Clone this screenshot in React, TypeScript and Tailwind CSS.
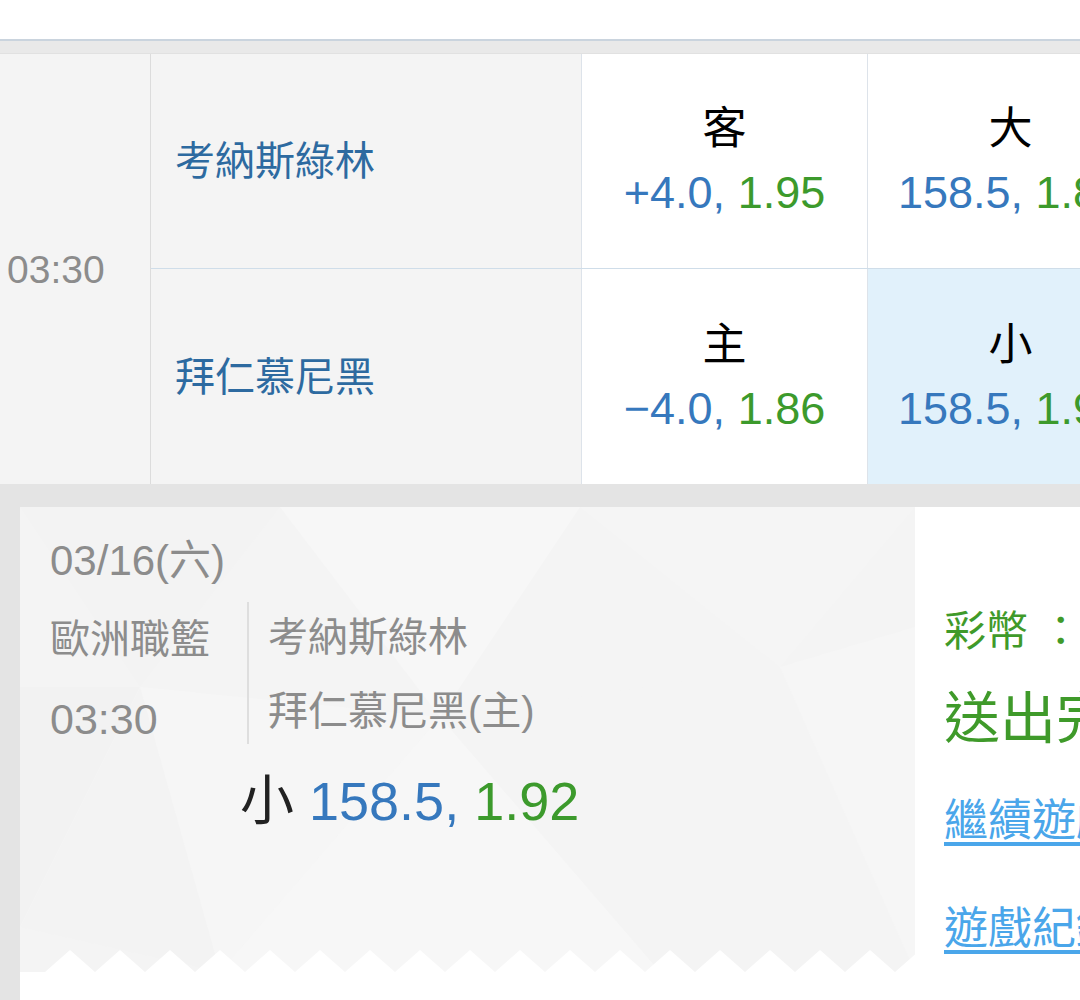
import React from 'react';

const font = { fontFamily: '"Liberation Sans", "Noto Sans CJK TC", sans-serif' };

const rows = [
  { team: '考納斯綠林', side: '客', line: '+4.0', odd: '1.95', ou: '大', total: '158.5', ouOdd: '1.85', picked: false },
  { team: '拜仁慕尼黑', side: '主', line: '\u22124.0', odd: '1.86', ou: '小', total: '158.5', ouOdd: '1.92', picked: true },
];

// faint low-poly background behind the ticket
const polys = [
  { p: '0,0 260,0 120,180', f: '#f3f3f3' },
  { p: '260,0 560,0 420,210', f: '#f7f7f7' },
  { p: '560,0 895,0 760,160', f: '#f5f5f5' },
  { p: '120,180 420,210 200,465', f: '#f6f6f6' },
  { p: '0,180 120,180 0,420', f: '#f2f2f2' },
  { p: '420,210 760,160 640,465', f: '#f4f4f4' },
  { p: '760,160 895,120 895,465', f: '#f6f6f6' },
  { p: '200,465 420,210 640,465', f: '#f7f7f7' },
  { p: '0,420 120,180 200,465', f: '#f3f3f3' },
];

const Zigzag = () => {
  const pts: string[] = ['0,22'];
  for (let x = 0; x <= 900; x += 50) {
    pts.push(`${x + 25},22`, `${x + 50},0`, `${x + 75},22`);
  }
  pts.push('895,22');
  return (
    <svg className="absolute left-0 bottom-0" width="895" height="22" viewBox="0 0 895 22">
      <polygon points={pts.join(' ')} fill="#ffffff" />
    </svg>
  );
};

export default function App() {
  return (
    <div className="w-[1080px] h-[1000px] overflow-hidden bg-white" style={font}>
      <div className="h-[39px] bg-white" />
      <div className="h-[2px] bg-[#cad4de]" />
      <div className="h-[13px] bg-[#e9e9e9] border-b border-[#e1e1e1]" />

      {/* odds table */}
      <div className="flex h-[430px]">
        <div className="w-[151px] shrink-0 bg-[#f4f4f4] border-r border-[#dcdcdc] flex items-center pl-[7px]">
          <span className="text-[39px] leading-none text-[#8c8c8c]">03:30</span>
        </div>
        <div className="flex flex-col flex-1">
          {rows.map((r, i) => (
            <div key={i} className={`flex h-[215px] ${i === 0 ? 'border-b border-[#cfdde9]' : ''}`}>
              <div className="w-[431px] shrink-0 bg-[#f4f4f4] border-r border-[#dde3ea] flex items-center pl-[24px]">
                <span className="text-[40px] leading-none text-[#2d6aa0]">{r.team}</span>
              </div>
              <div className="w-[286px] shrink-0 bg-white border-r border-[#dde3ea] flex flex-col items-center justify-center">
                <div className="text-[44px] leading-[64px] text-black">{r.side}</div>
                <div className="text-[45px] leading-[64px] whitespace-nowrap">
                  <span className="text-[#3678bd]">{r.line}, </span>
                  <span className="text-[#3c9a2c]">{r.odd}</span>
                </div>
              </div>
              <div className={`w-[285px] shrink-0 flex flex-col items-center justify-center ${r.picked ? 'bg-[#e1f1fb]' : 'bg-white'}`}>
                <div className="text-[44px] leading-[64px] text-black">{r.ou}</div>
                <div className="text-[45px] leading-[64px] whitespace-nowrap">
                  <span className="text-[#3678bd]">{r.total}, </span>
                  <span className="text-[#3c9a2c]">{r.ouOdd}</span>
                </div>
              </div>
            </div>
          ))}
        </div>
      </div>

      {/* bet slip */}
      <div className="bg-[#e4e4e4] pt-[23px] pl-[20px] h-[516px]">
        <div className="bg-white h-full flex">
          <div className="relative w-[895px] h-[465px] shrink-0 bg-[#f4f4f4] overflow-hidden">
            <svg className="absolute inset-0" width="895" height="465" viewBox="0 0 895 465">
              {polys.map((p, i) => (
                <polygon key={i} points={p.p} fill={p.f} />
              ))}
            </svg>
            <Zigzag />
            <div className="relative pl-[30px] pt-[34px] flex flex-col">
              <div className="text-[42px] leading-[40px] text-[#8c8c8c]">03/16(六)</div>
              <div className="flex mt-[21px] h-[142px]">
                <div className="w-[199px] border-r-2 border-[#dedede] flex flex-col pt-[17px]">
                  <div className="text-[40px] leading-[40px] text-[#8c8c8c]">歐洲職籃</div>
                  <div className="text-[43px] leading-[40px] text-[#8c8c8c] mt-[40px]">03:30</div>
                </div>
                <div className="flex flex-col pl-[19px] pt-[15px]">
                  <div className="text-[40px] leading-[40px] text-[#8c8c8c]">考納斯綠林</div>
                  <div className="text-[40px] leading-[40px] text-[#8c8c8c] mt-[34px]">拜仁慕尼黑(主)</div>
                </div>
              </div>
              <div className="ml-[190px] mt-[29px] text-[54px] leading-[56px] whitespace-nowrap">
                <span className="text-[#222]">小 </span>
                <span className="text-[#3678bd]">158.5, </span>
                <span className="text-[#3c9a2c]">1.92</span>
              </div>
            </div>
          </div>
          <div className="flex-1 bg-white pl-[29px] pt-[104px] flex flex-col whitespace-nowrap">
            <div className="text-[42px] leading-[42px] text-[#3f9a2a]">彩幣 ：</div>
            <div className="text-[56px] leading-[60px] text-[#3f9a2a] mt-[36px]">送出完成</div>
            <a className="text-[44px] leading-[48px] text-[#4aa6ea] underline underline-offset-[6px] mt-[48px]">繼續遊戲</a>
            <a className="text-[44px] leading-[48px] text-[#4aa6ea] underline underline-offset-[6px] mt-[60px]">遊戲紀錄</a>
          </div>
        </div>
      </div>
    </div>
  );
}
